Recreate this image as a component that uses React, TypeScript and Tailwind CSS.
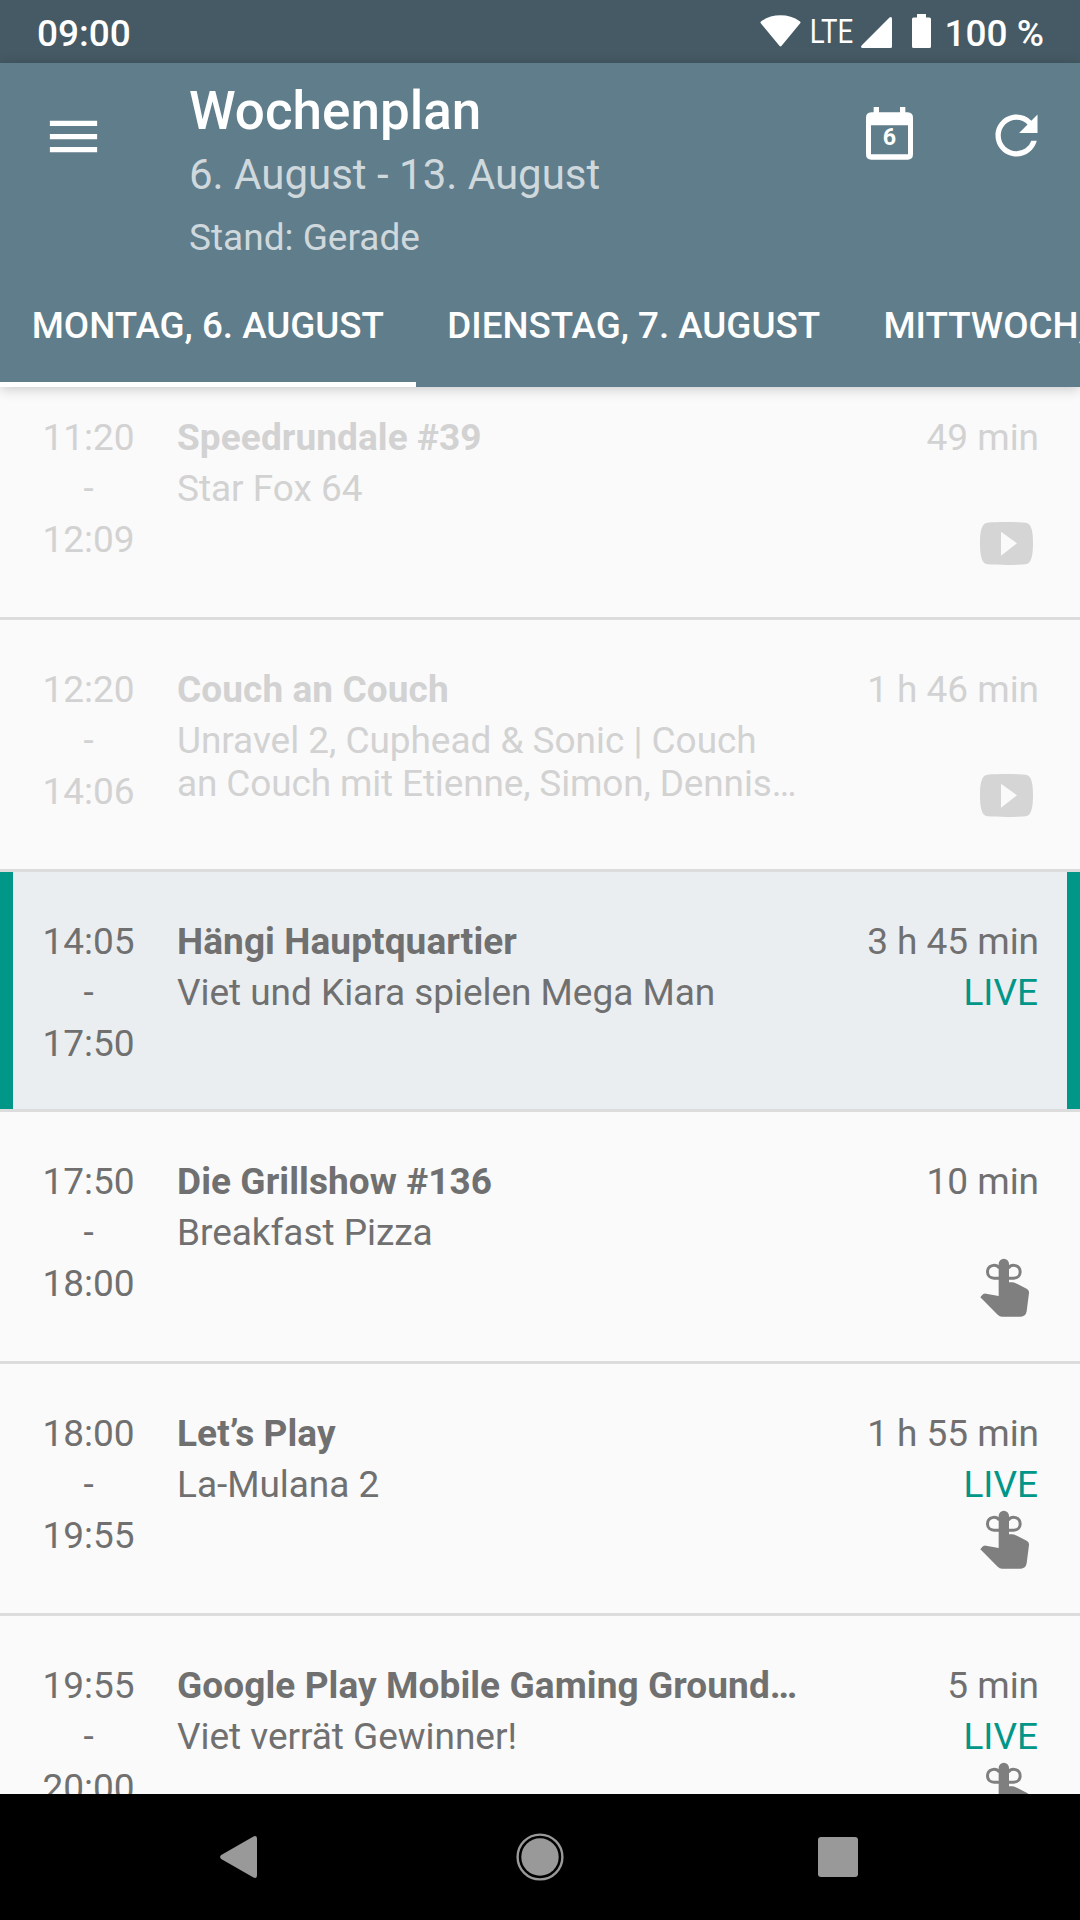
import React from "react";
import { MdMenu, MdRefresh } from "react-icons/md";

type Action = "youtube" | "reminder";

interface Show {
  start: string;
  end: string;
  title: string;
  lines: string[];
  duration: string;
  live?: boolean;
  past?: boolean;
  current?: boolean;
  action?: Action;
}

const SHOWS: Show[] = [
  { start: "11:20", end: "12:09", title: "Speedrundale #39", lines: ["Star Fox 64"], duration: "49 min", past: true, action: "youtube" },
  { start: "12:20", end: "14:06", title: "Couch an Couch", lines: ["Unravel 2, Cuphead & Sonic | Couch", "an Couch mit Etienne, Simon, Dennis…"], duration: "1 h 46 min", past: true, action: "youtube" },
  { start: "14:05", end: "17:50", title: "Hängi Hauptquartier", lines: ["Viet und Kiara spielen Mega Man"], duration: "3 h 45 min", live: true, current: true },
  { start: "17:50", end: "18:00", title: "Die Grillshow #136", lines: ["Breakfast Pizza"], duration: "10 min", action: "reminder" },
  { start: "18:00", end: "19:55", title: "Let’s Play", lines: ["La-Mulana 2"], duration: "1 h 55 min", live: true, action: "reminder" },
  { start: "19:55", end: "20:00", title: "Google Play Mobile Gaming Ground…", lines: ["Viet verrät Gewinner!"], duration: "5 min", live: true, action: "reminder" },
];

const TABS = ["MONTAG, 6. AUGUST", "DIENSTAG, 7. AUGUST", "MITTWOCH, 8. AUGUST"];

function YoutubeIcon() {
  return (
    <svg className="h-[43px] w-[53px]" viewBox="120 102 159 129" fill="#d5d5d5">
      <path
        fillRule="evenodd"
        d="M120 166C120 142 122 122 130 111Q134 105 142 104C170 101.500 228 101.500 257 104Q265 105 269 111C277 122 279 142 279 166S277 211 269 222Q265 228 257 229C228 231.500 170 231.500 142 229Q134 228 130 222C122 211 120 190 120 166ZM183 131V203L231 166Z"
      />
    </svg>
  );
}

function ReminderIcon() {
  return (
    <svg className="h-[60px] w-[50px]" viewBox="120 114 150 180" fill="#7f7f7f">
      <path d="M176 131.500a15.500 15.500 0 0 1 31 0V187H216Q222 187 227 189.500L260 206Q268 210 267 219L260 274Q257 290 242 290H186Q179 290 173 284L121 232L126 226Q130 220 138 221L176 228Z" />
      <path
        d="M178 144C168 131 142.500 134 142.500 156C142.500 167 151 174.500 162 174.500H178M205 144C215 131 240.500 134 240.500 156C240.500 167 232 174.500 221 174.500H205"
        fill="none"
        stroke="#7f7f7f"
        strokeWidth="9"
      />
    </svg>
  );
}

function StatusBar() {
  return (
    <div className="flex h-[63px] shrink-0 items-center bg-[#455a64] pt-[4px] pr-[37px] pl-[37px] text-[37px] leading-[43px] font-medium text-white">
      <span className="grow">09:00</span>
      <svg className="-mt-[5px] h-8 w-[41px]" viewBox="0 0 41 32" fill="white">
        <path d="M1 8.500Q-.2 7.200 1.300 6.200C12-1.700 29-1.700 39.700 6.200Q41.200 7.200 40 8.500L21.600 30.800Q20.500 32 19.400 30.800Z" />
      </svg>
      <div className="-mt-[3px] ml-[8px] flex w-[45px] justify-center">
        <span className="scale-x-[.85] text-[32.5px] font-normal">LTE</span>
      </div>
      <svg className="-mt-[3px] ml-[7px] h-[31px] w-[31px]" viewBox="0 0 31 31" fill="white">
        <path d="M28.500.6Q31-.9 31 2V29.500Q31 31 29.500 31H1.500Q-.8 31 .6 28.500Z" />
      </svg>
      <svg className="-mt-[5px] ml-5 h-[34px] w-[19px]" viewBox="0 0 19 34" fill="white">
        <path d="M5 0H14V3.500H17.500Q19 3.500 19 5V32.500Q19 34 17.500 34H1.500Q0 34 0 32.500V5Q0 3.500 1.500 3.500H5Z" />
      </svg>
      <span className="-mr-px ml-[13px]">100 %</span>
    </div>
  );
}

function CalendarIcon() {
  return (
    <div className="relative mt-[43.500px] h-[53px] w-[47px]">
      <svg className="h-full w-full" viewBox="438 320 141 159" fill="white">
        <path
          fillRule="evenodd"
          d="M461 320H477V336H540V320H556V336H563Q579 337 579 352V462Q579 478 563 478H454Q438 478 438 462V352Q438 337 454 336H461ZM453 375V462H564V375Z"
        />
      </svg>
      <span className="absolute inset-x-0 top-[16px] scale-x-[.95] text-center text-[24.5px] leading-[28px] font-bold">6</span>
    </div>
  );
}

function Header() {
  return (
    <header className="relative z-10 h-[324px] shrink-0 bg-[#607d8b] text-white shadow-[0_2px_12px_rgba(0,0,0,0.2)]">
      <div className="flex h-[214px]">
        <MdMenu className="mt-[42px] ml-[42px] h-[63px] w-[63px]" />
        <div className="ml-[84px] grow pt-[18px]">
          <h1 className="text-[53px] leading-[61px] font-medium">Wochenplan</h1>
          <p className="mt-[8px] text-[42px] leading-[49px] text-[#cfd8dc]">6. August - 13. August</p>
          <p className="mt-[17px] text-[37px] leading-[43px] text-[#cfd8dc]">Stand: Gerade</p>
        </div>
        <CalendarIcon />
        <MdRefresh className="mt-[41px] mr-[32px] ml-[72px] h-[63px] w-[63px]" />
      </div>
      <nav className="flex h-[110px] overflow-hidden text-[36.75px] leading-[43px] font-medium whitespace-nowrap">
        {TABS.map((tab, i) => (
          <div
            key={tab}
            className={`shrink-0 border-b-[5px] px-[31.7px] pt-[27px] ${i === 0 ? "border-white" : "border-transparent"}`}
          >
            {tab}
          </div>
        ))}
      </nav>
    </header>
  );
}

function ShowRow({ show }: { show: Show }) {
  const tone = show.past ? "text-[#d2d2d2]" : "text-[#707070]";
  const surface = show.current
    ? "h-[240px] bg-[#ebeef1]"
    : "h-[252px]";
  return (
    <li className={`flex shrink-0 border-b-[3px] border-[#dcdcdc] ${surface} ${tone}`}>
      <div className={`w-[13px] ${show.current ? "bg-[#009688]" : ""}`} />
      <div className="ml-[29px] flex w-[93px] flex-col items-center pt-[44px] leading-[51px]">
        <span>{show.start}</span>
        <span>-</span>
        <span>{show.end}</span>
      </div>
      <div className="ml-[42px] w-[638px] pt-[44px] whitespace-nowrap">
        <h2 className="leading-[51px] font-bold tracking-[0.08px]">{show.title}</h2>
        <p className="pt-1 leading-[43px]">
          {show.lines.map((line) => (
            <span key={line} className={`block ${line.endsWith("…") ? "tracking-[-0.15px]" : "tracking-[-0.04px]"}`}>{line}</span>
          ))}
        </p>
      </div>
      <div className="flex grow flex-col items-end pt-[44px] leading-[51px] whitespace-nowrap">
        <span className="mr-[1px] tracking-[-0.04px]">{show.duration}</span>
        <span className="mr-[2px] h-[51px] text-[#009688]">{show.live ? "LIVE" : ""}</span>
        {show.action === "youtube" && <div className="mt-[8px] mr-[7px]"><YoutubeIcon /></div>}
        {show.action === "reminder" && <div className="mr-[10px]"><ReminderIcon /></div>}
      </div>
      <div className={`ml-[27px] w-[13px] ${show.current ? "bg-[#009688]" : ""}`} />
    </li>
  );
}

function NavigationBar() {
  return (
    <footer className="flex h-[126px] shrink-0 items-center bg-black pl-[220px]">
      <svg className="h-[42px] w-[37px]" viewBox="0 0 37 42" fill="#999">
        <path d="M33.500.5Q37-1 37 3V39Q37 43 33.500 41.500L1.200 23Q-1 21 1.200 19Z" />
      </svg>
      <svg className="ml-[258.500px] h-[48px] w-[48px]" viewBox="0 0 48 48" fill="#999">
        <circle cx="24" cy="24" r="18.700" />
        <circle cx="24" cy="24" r="22.400" fill="none" stroke="#999" strokeWidth="2.400" />
      </svg>
      <div className="ml-[254.500px] h-[40px] w-[40px] rounded-[3px] bg-[#999]" />
    </footer>
  );
}

export default function App() {
  return (
    <div className="flex h-[1920px] w-[1080px] flex-col overflow-hidden bg-[#fafafa] font-[Roboto,sans-serif]">
      <StatusBar />
      <Header />
      <main className="min-h-0 grow overflow-hidden">
        <ul className="-mt-[19px] flex flex-col text-[37px]">
          {SHOWS.map((show) => (
            <ShowRow key={show.start} show={show} />
          ))}
        </ul>
      </main>
      <NavigationBar />
    </div>
  );
}
